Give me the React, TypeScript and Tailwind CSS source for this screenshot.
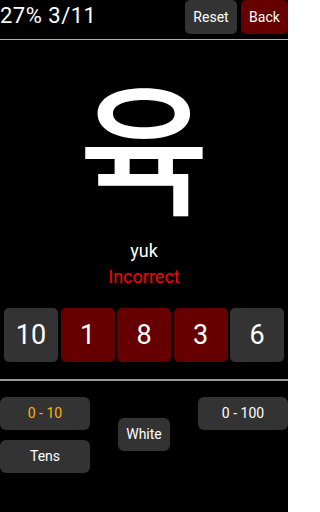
import React from "react";

export default function App() {
  const tiles = [
    { n: "10", red: false },
    { n: "1", red: true },
    { n: "8", red: true },
    { n: "3", red: true },
    { n: "6", red: false },
  ];
  return (
    <div
      className="w-[288px] h-[512px] bg-black text-white overflow-hidden flex flex-col"
      style={{ fontFamily: "Roboto, 'Noto Sans', sans-serif" }}
    >
      <div className="flex items-start h-[39px]">
        <div className="text-[22px] leading-[32px] flex-1 tracking-[0.5px]">27% 3/11</div>
        <button className="w-[52px] h-[34px] rounded-[5px] bg-[#333333] text-[14px] text-white mr-[4px]">Reset</button>
        <button className="w-[47px] h-[34px] rounded-[5px] bg-[#660000] text-[14px] text-white">Back</button>
      </div>
      <div className="h-px bg-[#b0b0b0]" />
      <div className="flex flex-col items-center">
        <div className="h-[190px] pt-[13px] w-full flex items-center justify-center">
          <span
            className="text-[142px] leading-[120px] font-medium"
            style={{ fontFamily: "'Noto Sans CJK KR', sans-serif" }}
          >
            육
          </span>
        </div>
        <div className="text-[18px] leading-[22px] mt-[10px]">yuk</div>
        <div className="text-[18px] leading-[22px] text-[#ff0000] mt-[4px]">Incorrect</div>
      </div>
      <div className="flex gap-[2.5px] px-[4px] mt-[20px]">
        {tiles.map((t, i) => (
          <div
            key={i}
            className={
              "w-[54px] h-[54px] rounded-[5px] flex items-center justify-center text-[27px] " +
              (t.red ? "bg-[#660000]" : "bg-[#333333]")
            }
          >
            {t.n}
          </div>
        ))}
      </div>
      <div className="h-[2px] bg-[#999999] mt-[17px]" />
      <div className="flex mt-[16px]">
        <div className="flex flex-col gap-[10px]">
          <button className="w-[90px] h-[33px] rounded-[6px] bg-[#333333] text-[14px] text-[#f5b800]">0 - 10</button>
          <button className="w-[90px] h-[33px] rounded-[6px] bg-[#333333] text-[14px] text-white">Tens</button>
        </div>
        <div className="flex-1 flex justify-center pt-[21px]">
          <button className="w-[52px] h-[33px] rounded-[6px] bg-[#333333] text-[14px] text-white">White</button>
        </div>
        <div>
          <button className="w-[90px] h-[33px] rounded-[6px] bg-[#333333] text-[14px] text-white">0 - 100</button>
        </div>
      </div>
    </div>
  );
}
